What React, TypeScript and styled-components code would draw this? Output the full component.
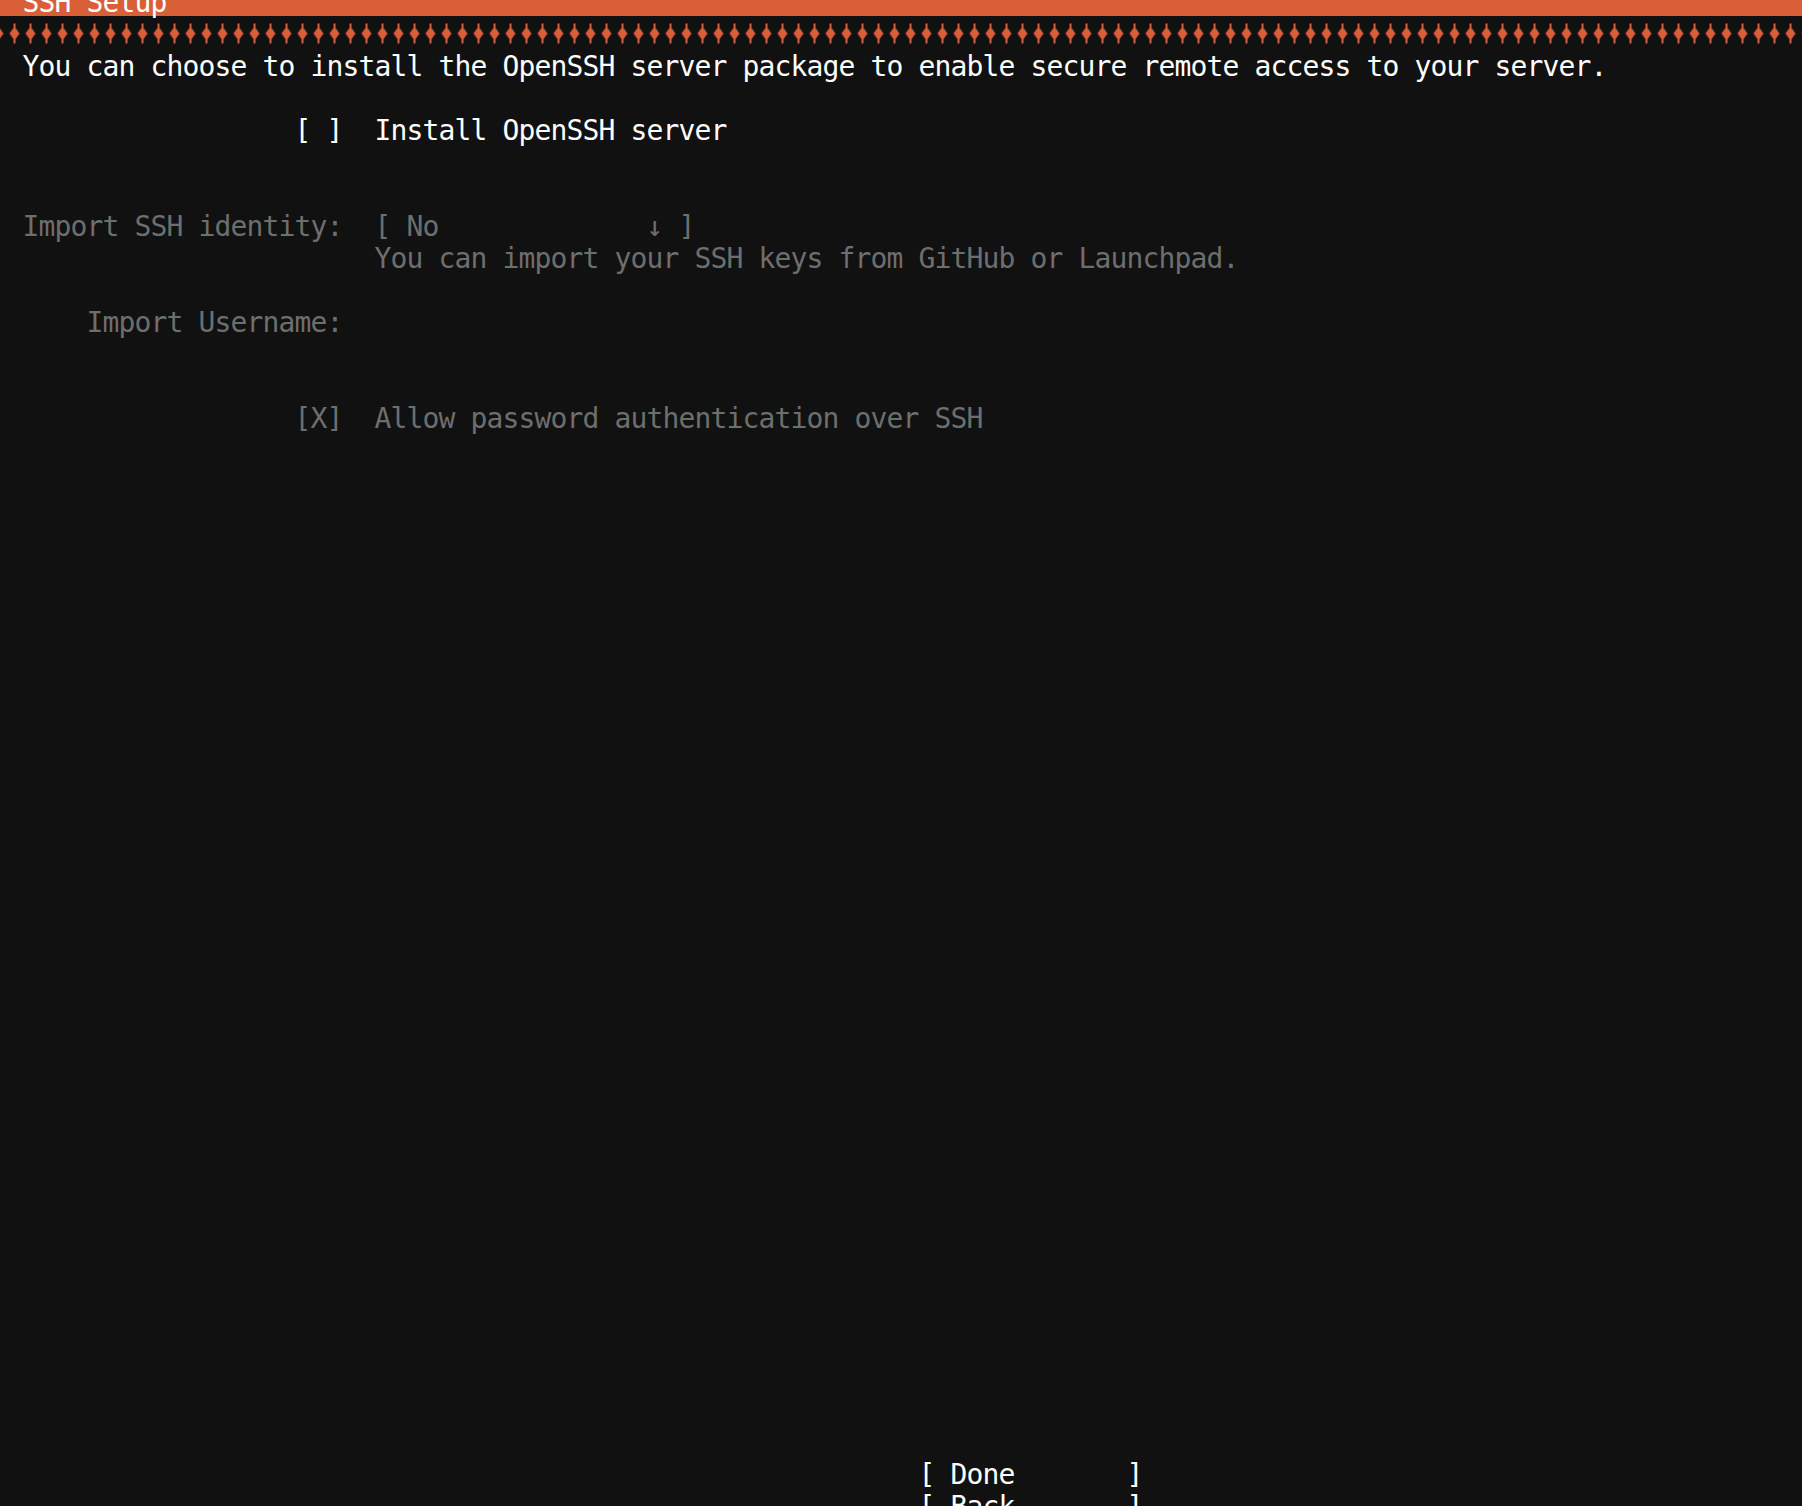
import React from 'react';
import styled, { createGlobalStyle } from 'styled-components';

// terminal grid: 16px columns, 32px rows, column 0 starts at 6.5px
const CELL_W = 16;
const ROW_H = 32;
const colX = (c: number) => 6.5 + CELL_W * c;

const colors = {
  bg: '#111111',
  orange: '#d85f36',
  bright: '#ffffff',
  dim: '#6e6e6e',
};

const GlobalStyle = createGlobalStyle`
  html, body {
    margin: 0;
    height: 100%;
    background: ${colors.bg};
    overflow: hidden;
  }
  #root {
    height: 100%;
  }
`;

const Screen = styled.main`
  height: ${ROW_H * 48}px;
  margin-top: -${ROW_H / 2}px;
  display: flex;
  flex-direction: column;
  font-family: 'DejaVu Sans Mono', 'Liberation Mono', monospace;
  font-size: 28px;
  letter-spacing: -0.857px;
  white-space: pre;
  color: ${colors.bright};
`;

const Line = styled.div<{ $dim?: boolean }>`
  height: ${ROW_H}px;
  line-height: 38px;
  color: ${({ $dim }) => ($dim ? colors.dim : colors.bright)};
`;

const Header = styled.header`
  background: ${colors.orange};
  padding-left: ${colX(1)}px;
`;

const Separator = styled.svg`
  display: block;
  width: 100%;
  height: ${ROW_H}px;
`;

const Body = styled.section`
  padding-left: ${colX(1)}px;
`;

const FormRow = styled.div<{ $gapRows?: number }>`
  display: grid;
  grid-template-columns: ${CELL_W * 20}px 1fr;
  column-gap: ${CELL_W * 2}px;
  margin-top: ${({ $gapRows = 0 }) => $gapRows * ROW_H}px;
`;

const Label = styled(Line)`
  text-align: right;
`;

const Value = styled.div`
  display: flex;
  flex-direction: column;
`;

const Buttons = styled.nav`
  margin-top: auto;
  padding-left: ${colX(57)}px;
  display: flex;
  flex-direction: column;
`;

const ButtonRow = styled(Line)`
  display: grid;
  grid-template-columns: ${CELL_W}px ${CELL_W * 12}px ${CELL_W}px;
`;

const ButtonLabel = styled.span`
  padding-left: ${CELL_W}px;
`;

const Diamonds = () => (
  <Separator>
    <defs>
      <pattern id="sep" x={6.5} y={0} width={CELL_W} height={ROW_H} patternUnits="userSpaceOnUse">
        <rect x={7} y={7.5} width={2} height={20} fill={colors.orange} />
        <polygon points="8,10.5 13,17.5 8,24.5 3,17.5" fill={colors.orange} />
      </pattern>
    </defs>
    <rect width="100%" height="100%" fill="url(#sep)" />
  </Separator>
);

const TermButton = ({ label }: { label: string }) => (
  <ButtonRow>
    <span>[</span>
    <ButtonLabel>{label}</ButtonLabel>
    <span>]</span>
  </ButtonRow>
);

export default function App() {
  return (
    <>
      <GlobalStyle />
      <Screen>
        <Header>
          <Line>SSH Setup</Line>
        </Header>
        <Diamonds />
        <Body>
          <Line>
            You can choose to install the OpenSSH server package to enable secure remote access to your server.
          </Line>
          <FormRow $gapRows={1}>
            <Label>[ ]</Label>
            <Line>Install OpenSSH server</Line>
          </FormRow>
          <FormRow $gapRows={2}>
            <Label $dim>Import SSH identity:</Label>
            <Value>
              <Line $dim>{'[ No             \u2193 ]'}</Line>
              <Line $dim>You can import your SSH keys from GitHub or Launchpad.</Line>
            </Value>
          </FormRow>
          <FormRow $gapRows={1}>
            <Label $dim>Import Username:</Label>
            <Line $dim />
          </FormRow>
          <FormRow $gapRows={2}>
            <Label $dim>[X]</Label>
            <Line $dim>Allow password authentication over SSH</Line>
          </FormRow>
        </Body>
        <Buttons>
          <TermButton label="Done" />
          <TermButton label="Back" />
        </Buttons>
      </Screen>
    </>
  );
}
